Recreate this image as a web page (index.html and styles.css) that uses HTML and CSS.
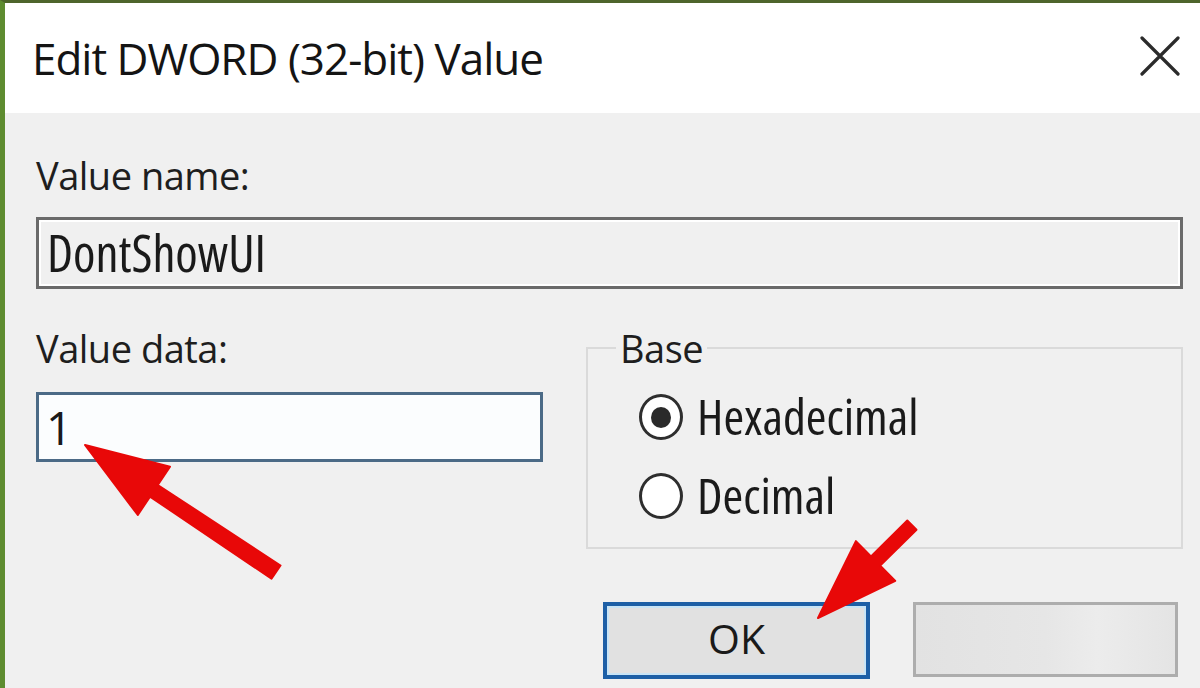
FILE: index.html
```html
<!DOCTYPE html>
<html lang="en">
<head>
<meta charset="utf-8">
<title>Edit DWORD (32-bit) Value</title>
<link rel="stylesheet" href="styles.css">
</head>
<body>
<div class="dialog">
  <div class="titlebar">
    <span class="title">Edit DWORD (32-bit) Value</span>
    <svg class="close" width="40" height="40" viewBox="0 0 40 40" aria-label="Close">
      <path d="M2 2 L38 38 M38 2 L2 38" stroke="#2b2b2b" stroke-width="3.2" fill="none" stroke-linecap="round"/>
    </svg>
  </div>
  <div class="content">
    <div class="label">Value name:</div>
    <div class="namefield"><span class="nametext">DontShowUI</span></div>
    <div class="row">
      <div class="datacol">
        <div class="label">Value data:</div>
        <div class="datafield"><span class="datatext">1</span></div>
      </div>
      <fieldset class="group">
        <legend class="legend">Base</legend>
        <div class="radio radio-hex">
          <span class="circle checked"><span class="dot"></span></span>
          <span class="rtext">Hexadecimal</span>
        </div>
        <div class="radio radio-dec">
          <span class="circle"></span>
          <span class="rtext rtext-dec">Decimal</span>
        </div>
      </fieldset>
    </div>
    <div class="buttons">
      <div class="btn btn-ok">OK</div>
      <div class="btn btn-cancel"></div>
    </div>
  </div>
</div>
<svg class="arrows" width="1200" height="688" viewBox="0 0 1200 688">
  <polygon fill="#e80808" stroke="#e80808" stroke-width="2" stroke-linejoin="round"
    points="85,445 170,466.6 157.8,485 280.5,565.5 271.5,578.7 150,496.6 137.8,515"/>
  <polygon fill="#e80808" stroke="#e80808" stroke-width="2" stroke-linejoin="round"
    points="818,618 855.9,541.1 871,556.4 907.3,520.5 916.5,529.7 880.2,565.6 895.3,580.9"/>
</svg>
</body>
</html>
```

FILE: styles.css
```css
html, body {
  margin: 0;
  padding: 0;
  background: #f0f0f0;
}
body {
  position: relative;
  width: 1200px;
  height: 688px;
  overflow: hidden;
  font-family: "Open Sans", "Noto Sans", sans-serif;
  color: #1a1a1a;
}
.dialog {
  box-sizing: border-box;
  height: 688px;
  border-top: 3px solid #4e652c;
  border-left: 5px solid #5e8c30;
  background: #f0f0f0;
}
.titlebar {
  height: 110px;
  background: #ffffff;
  display: flex;
  align-items: center;
  justify-content: space-between;
  padding: 0 20px 0 27px;
}
.title {
  font-size: 44px;
  letter-spacing: -1px;
  line-height: 1;
  color: #141414;
}
.close {
  display: block;
  margin-top: -4px;
}
.content {
  padding: 0 17px 0 31px;
}
.label {
  font-size: 38px;
  line-height: 38px;
  letter-spacing: -0.5px;
  color: #1e1e1e;
}
.content > .label {
  margin-top: 43px;
}
.namefield {
  box-sizing: border-box;
  margin-top: 23px;
  height: 72px;
  border: 3px solid #6a6a6a;
  box-shadow: inset 0 0 0 2px #ffffff;
  background: #f0f0f0;
  display: flex;
  align-items: center;
  padding-left: 8px;
}
.nametext {
  font-size: 51px;
  font-stretch: condensed;
  line-height: 1;
  color: #1a1a1a;
  margin-top: -2px;
}
.row {
  display: flex;
  margin-top: 40px;
  gap: 43px;
}
.datacol {
  width: 507px;
  flex: none;
}
.datafield {
  box-sizing: border-box;
  margin-top: 25px;
  height: 70px;
  border: 3px solid #4b6a86;
  background: #fbfdfe;
  display: flex;
  align-items: center;
  padding-left: 7px;
}
.datatext {
  font-size: 46px;
  line-height: 1;
}
.group {
  flex: 1;
  box-sizing: border-box;
  height: 220px;
  margin: 0;
  padding: 0;
  border: 2px solid #dadada;
  min-width: 0;
}
.legend {
  margin-left: 28px;
  padding: 0 4px;
  font-size: 38px;
  line-height: 38px;
  letter-spacing: -0.5px;
  color: #1e1e1e;
}
.radio {
  display: flex;
  align-items: center;
  gap: 14px;
  height: 48px;
  padding-left: 51px;
}
.radio-hex {
  margin-top: 26px;
}
.radio-dec {
  margin-top: 31px;
}
.circle {
  box-sizing: border-box;
  width: 44px;
  height: 46px;
  border: 3px solid #2e2e2e;
  border-radius: 50%;
  background: #ffffff;
  display: flex;
  align-items: center;
  justify-content: center;
  flex: none;
}
.dot {
  width: 20px;
  height: 21px;
  border-radius: 50%;
  background: #2a2a2a;
}
.rtext {
  font-size: 50px;
  line-height: 1;
  font-stretch: condensed;
  color: #1a1a1a;
  margin-top: -2px;
}
.buttons {
  display: flex;
  margin-top: 53px;
  padding-left: 567px;
  gap: 43px;
  align-items: flex-start;
}
.btn {
  box-sizing: border-box;
  display: flex;
  align-items: center;
  justify-content: center;
  background: #e1e1e1;
}
.btn-ok {
  width: 267px;
  height: 77px;
  border: 4px solid #1d5fa6;
  box-shadow: inset 0 0 0 2px #c8e4f6;
  font-size: 41px;
  line-height: 1;
  color: #1a1a1a;
  padding-bottom: 4px;
}
.btn-cancel {
  width: 265px;
  height: 75px;
  border: 3px solid #adadad;
  background: linear-gradient(90deg, #e2e2e2 0%, #e6e6e6 50%, #ececec 70%, #e4e4e4 100%);
}
.arrows {
  position: absolute;
  left: 0;
  top: 0;
  pointer-events: none;
}
```
